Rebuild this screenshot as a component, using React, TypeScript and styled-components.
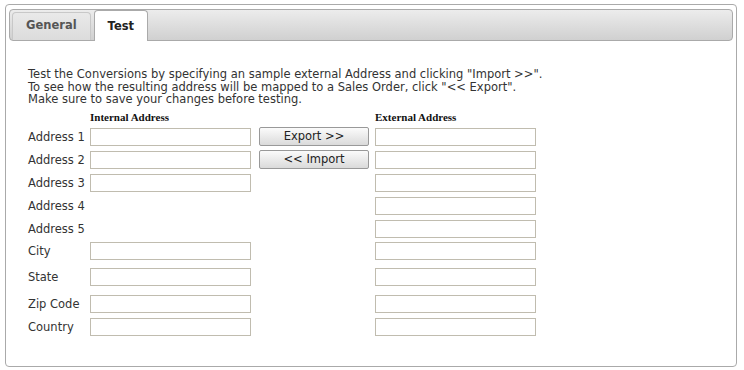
import styled, { createGlobalStyle } from 'styled-components';

/// UTILS BELOW
/** ***************************************************** */
const GlobalStyle = createGlobalStyle`
  body {
    margin: 0;
    background: #fff;
    font-family: "DejaVu Sans", Verdana, sans-serif;
  }
`;

type Row = {
  label: string;
  internal: boolean;
  button?: string;
  top: number;
};

const ROWS: Row[] = [
  { label: 'Address 1', internal: true, button: 'Export >>', top: 4 },
  { label: 'Address 2', internal: true, button: '<< Import', top: 5 },
  { label: 'Address 3', internal: true, top: 5 },
  { label: 'Address 4', internal: false, top: 5 },
  { label: 'Address 5', internal: false, top: 5 },
  { label: 'City', internal: true, top: 4 },
  { label: 'State', internal: true, top: 8 },
  { label: 'Zip Code', internal: true, top: 9 },
  { label: 'Country', internal: true, top: 5 },
];

const Panel = styled.div`
  box-sizing: border-box;
  margin: 4px 0 0 5px;
  width: 732px;
  height: 363px;
  padding: 4px 3px;
  border: 1px solid #aaa;
  border-radius: 4px;
  background: #fff;
`;

const TabBar = styled.div`
  box-sizing: border-box;
  display: flex;
  align-items: flex-end;
  gap: 3px;
  height: 32px;
  padding: 0 2px;
  border: 1px solid #aaa;
  border-radius: 4px;
  background: linear-gradient(#ececec, #d0d0d0);
`;

const Tab = styled.div<{ active?: boolean }>`
  box-sizing: border-box;
  height: ${(p) => (p.active ? '31px' : '28px')};
  margin-bottom: ${(p) => (p.active ? '-1px' : '0')};
  padding: 0 ${(p) => (p.active ? '13px' : '13px')};
  padding-bottom: ${(p) => (p.active ? '1px' : '3px')};
  display: flex;
  align-items: center;
  border: 1px solid ${(p) => (p.active ? '#aaa' : '#c8c8c8')};
  border-bottom: none;
  border-radius: 4px 4px 0 0;
  background: ${(p) => (p.active ? '#fff' : 'linear-gradient(#e9e9e9, #dcdcdc)')};
  color: ${(p) => (p.active ? '#222' : '#555')};
  font-weight: bold;
  font-size: 11.5px;
`;

const Content = styled.div`
  padding: 27px 0 0 19px;
  color: #333;
  font-size: 11.5px;
`;

const Intro = styled.p`
  margin: 0;
  line-height: 12.5px;
`;

const FormGrid = styled.div`
  display: grid;
  grid-template-columns: 62px 169px 116px 161px;
  margin-top: 5px;
`;

const ColumnHeading = styled.div<{ col: number }>`
  grid-column: ${(p) => p.col};
  font-family: "Liberation Serif", "Times New Roman", serif;
  font-weight: bold;
  font-size: 11px;
  color: #111;
  line-height: 13px;
`;

const Label = styled.div<{ top: number }>`
  grid-column: 1;
  margin-top: ${(p) => p.top}px;
  height: 18px;
  display: flex;
  align-items: center;
`;

const Field = styled.input<{ top: number }>`
  box-sizing: border-box;
  width: 161px;
  height: 18px;
  margin: ${(p) => p.top}px 0 0;
  padding: 0 3px;
  border: 1px solid #c0bcaf;
  background: #fff;
  font: inherit;
  outline: none;
`;

const Spacer = styled.div<{ top: number }>`
  margin-top: ${(p) => p.top}px;
`;

const Button = styled.button<{ top: number }>`
  box-sizing: border-box;
  width: 110px;
  height: 19px;
  margin-top: ${(p) => p.top - 1}px;
  padding: 0;
  border: 1px solid #999;
  border-radius: 2px;
  background: linear-gradient(#fbfbfb, #dadada);
  color: #222;
  font-family: inherit;
  font-size: 11.5px;
  cursor: pointer;
`;

///  COMPONENT BELOW
/** ***************************************************** */
export default function App() {
  return (
    <>
      <GlobalStyle />
      <Panel>
        <TabBar>
          <Tab>General</Tab>
          <Tab active>Test</Tab>
        </TabBar>

        <Content>
          <Intro>
            Test the Conversions by specifying an sample external Address and clicking "Import &gt;&gt;".
            <br />
            To see how the resulting address will be mapped to a Sales Order, click "&lt;&lt; Export".
            <br />
            Make sure to save your changes before testing.
          </Intro>

          <FormGrid>
            <ColumnHeading col={2}>Internal Address</ColumnHeading>
            <ColumnHeading col={4}>External Address</ColumnHeading>

            {ROWS.map(({ label, internal, button, top }) => (
              <>
                <Label key={label} top={top}>
                  {label}
                </Label>
                {internal ? <Field top={top} /> : <Spacer top={top} />}
                {button ? <Button top={top}>{button}</Button> : <Spacer top={top} />}
                <Field top={top} />
              </>
            ))}
          </FormGrid>
        </Content>
      </Panel>
    </>
  );
}
